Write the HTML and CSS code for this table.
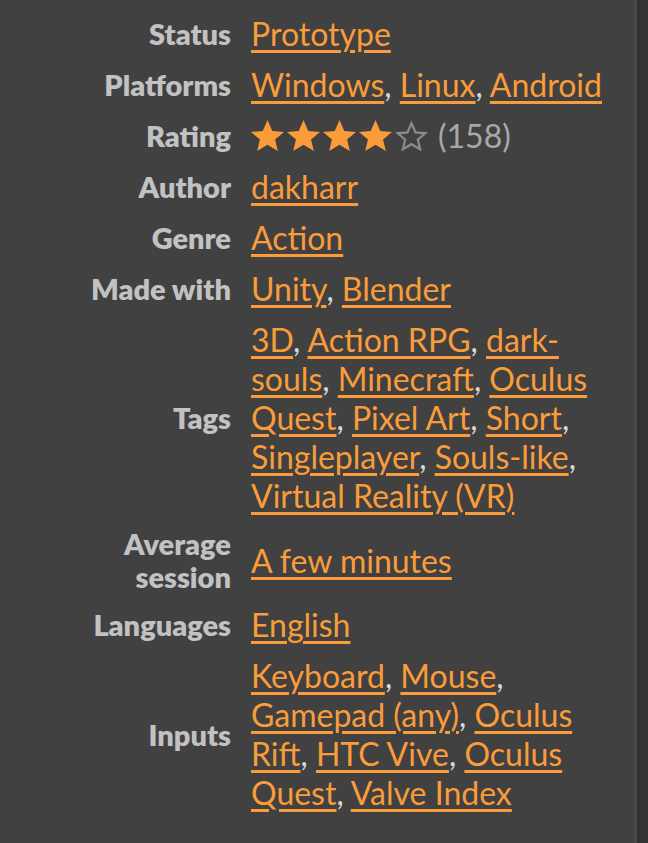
FILE: index.html
```html
<!DOCTYPE html>
<html lang="en">
<head>
<meta charset="utf-8">
<title>More information</title>
<link rel="stylesheet" href="styles.css">
</head>
<body>
<div class="panel">
  <div class="info">
    <div class="label">Status</div>
    <div class="value"><a href="#">Prototype</a></div>

    <div class="label">Platforms</div>
    <div class="value"><a href="#">Windows</a>, <a href="#">Linux</a>, <a href="#">Android</a></div>

    <div class="label">Rating</div>
    <div class="value rating">
      <span class="stars">
        <svg class="star" viewBox="1.3 1.5 21.4 20.1"><path class="fill" d="M12 1.5l3.1 7.1 7.6.6-5.8 5 1.8 7.4L12 17.6l-6.7 4 1.8-7.4-5.8-5 7.6-.6z"/></svg>
        <svg class="star" viewBox="1.3 1.5 21.4 20.1"><path class="fill" d="M12 1.5l3.1 7.1 7.6.6-5.8 5 1.8 7.4L12 17.6l-6.7 4 1.8-7.4-5.8-5 7.6-.6z"/></svg>
        <svg class="star" viewBox="1.3 1.5 21.4 20.1"><path class="fill" d="M12 1.5l3.1 7.1 7.6.6-5.8 5 1.8 7.4L12 17.6l-6.7 4 1.8-7.4-5.8-5 7.6-.6z"/></svg>
        <svg class="star" viewBox="1.3 1.5 21.4 20.1"><path class="fill" d="M12 1.5l3.1 7.1 7.6.6-5.8 5 1.8 7.4L12 17.6l-6.7 4 1.8-7.4-5.8-5 7.6-.6z"/></svg>
        <svg class="star" viewBox="1.3 1.5 21.4 20.1"><path class="empty" d="M12 3.6l2.6 6 6.3.5-4.8 4.2 1.5 6.2L12 17.2l-5.6 3.3 1.5-6.2-4.8-4.2 6.3-.5z"/></svg>
      </span>
      <span class="count">(158)</span>
    </div>

    <div class="label">Author</div>
    <div class="value"><a href="#">dakharr</a></div>

    <div class="label">Genre</div>
    <div class="value"><a href="#">Action</a></div>

    <div class="label">Made with</div>
    <div class="value"><a href="#">Unity</a>, <a href="#">Blender</a></div>

    <div class="label">Tags</div>
    <div class="value"><a href="#">3D</a>, <a href="#">Action RPG</a>, <a href="#">dark-souls</a>, <a href="#">Minecraft</a>, <a href="#">Oculus Quest</a>, <a href="#">Pixel Art</a>, <a href="#">Short</a>, <a href="#">Singleplayer</a>, <a href="#">Souls-like</a>, <a href="#">Virtual Reality (VR)</a></div>

    <div class="label">Average session</div>
    <div class="value"><a href="#">A few minutes</a></div>

    <div class="label">Languages</div>
    <div class="value"><a href="#">English</a></div>

    <div class="label">Inputs</div>
    <div class="value"><a href="#">Keyboard</a>, <a href="#">Mouse</a>, <a href="#">Gamepad (any)</a>, <a href="#">Oculus Rift</a>, <a href="#">HTC Vive</a>, <a href="#">Oculus Quest</a>, <a href="#">Valve Index</a></div>
  </div>
</div>
</body>
</html>
```

FILE: styles.css
```css
html, body {
  margin: 0;
  padding: 0;
  background: #333333;
}

body {
  font-family: Lato, "Liberation Sans", sans-serif;
  font-size: 32px;
  color: #d4d4d4;
}

.panel {
  width: 637px;
  min-height: 843px;
  box-sizing: border-box;
  background: #414141;
  border-right: 3px solid #4a4a4a;
  padding: 8px 20px 0 81px;
}

.info {
  display: grid;
  grid-template-columns: 160px 1fr;
  align-items: center;
}

.label {
  display: flex;
  align-items: center;
  justify-content: flex-end;
  text-align: right;
  font-weight: 800;
  font-size: 29px;
  color: #c2c2c2;
  line-height: 33px;
  padding: 6px 10px 6px 0;
}

.value {
  line-height: 39px;
  padding: 6px 0 6px 10px;
  color: #d8d8d8;
}

.value a {
  color: #fa9c3a;
  text-decoration: underline;
  text-decoration-thickness: 3px;
  text-underline-offset: 4px;
}

.rating {
  display: flex;
  align-items: center;
}

.stars {
  display: flex;
  gap: 3px;
}

.star {
  width: 33px;
  height: 31px;
  display: block;
}

.star .fill {
  fill: #fa9c3a;
}

.star .empty {
  fill: none;
  stroke: #8a8a8a;
  stroke-width: 1.5;
}

.count {
  color: #a8a8a8;
  margin-left: 10px;
}
```
